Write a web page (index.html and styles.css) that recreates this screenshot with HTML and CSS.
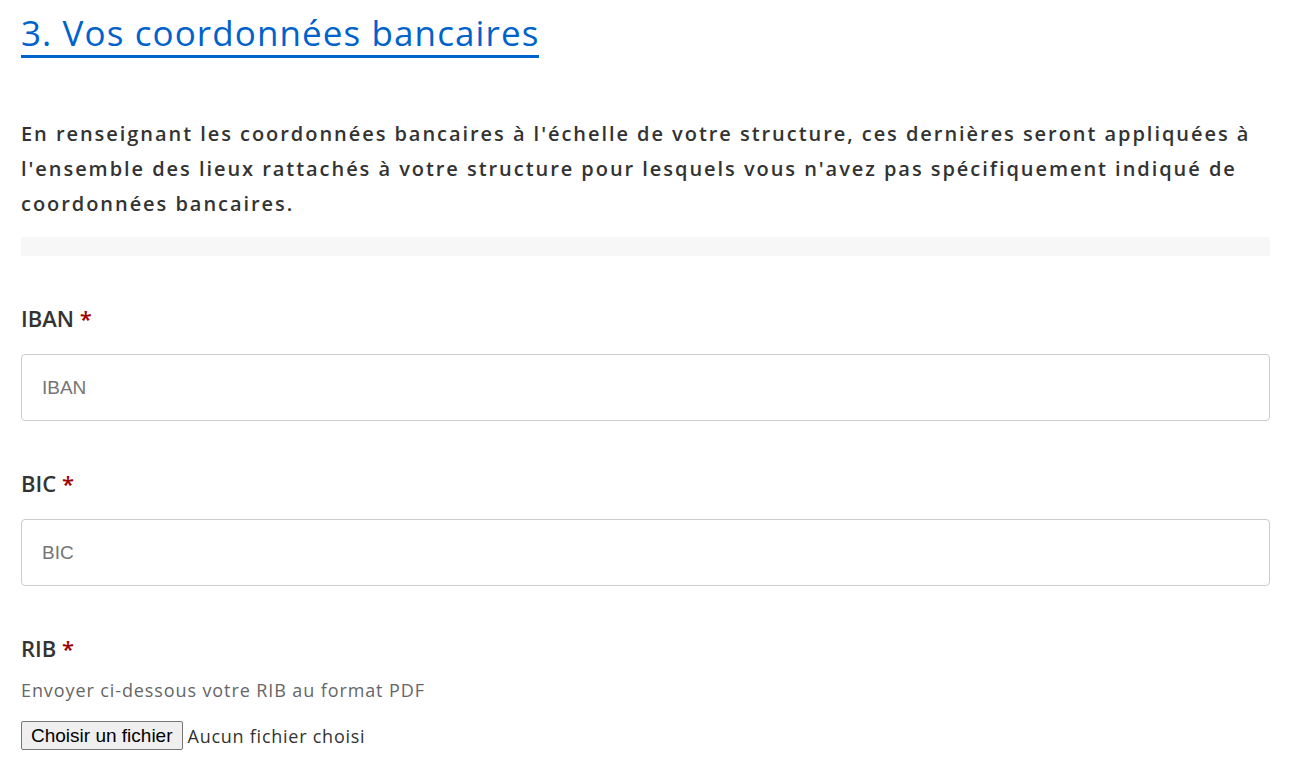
FILE: index.html
```html
<!DOCTYPE html>
<html lang="fr">
<head>
  <meta charset="UTF-8">
  <meta name="viewport" content="width=device-width, initial-scale=1.0">
  <title>Coordonnées bancaires</title>
  <link rel="stylesheet" href="styles.css">
</head>
<body>
  <main class="page">
    <h2 class="section-title">3. Vos coordonnées bancaires</h2>

    <p class="intro">
      En renseignant les coordonnées bancaires à l'échelle de votre structure, ces dernières seront appliquées à
      l'ensemble des lieux rattachés à votre structure pour lesquels vous n'avez pas spécifiquement indiqué de
      coordonnées bancaires.
    </p>

    <div class="band"></div>

    <div class="field">
      <label for="iban">IBAN <span class="required">*</span></label>
      <input type="text" id="iban" name="iban" placeholder="IBAN">
    </div>

    <div class="field">
      <label for="bic">BIC <span class="required">*</span></label>
      <input type="text" id="bic" name="bic" placeholder="BIC">
    </div>

    <div class="field field-file">
      <label for="rib">RIB <span class="required">*</span></label>
      <p class="help">Envoyer ci-dessous votre RIB au format PDF</p>
      <label class="file-picker">
        <input type="file" id="rib" name="rib" accept="application/pdf">
        <span class="file-button">Choisir un fichier</span>
        <span class="file-name">Aucun fichier choisi</span>
      </label>
    </div>
  </main>
</body>
</html>
```

FILE: styles.css
```css
* {
  box-sizing: border-box;
}

body {
  margin: 0;
  font-family: 'Open Sans', 'Noto Sans', sans-serif;
  color: #333;
}

.page {
  padding: 0 36px 0 21px;
}

.section-title {
  display: inline-block;
  margin: 11px 0 0;
  font-size: 35px;
  font-weight: 400;
  letter-spacing: 1.1px;
  line-height: 44px;
  color: #0063cb;
  border-bottom: 3px solid #0063cb;
}

.intro {
  margin: 58px 0 0;
  font-size: 20px;
  font-weight: 600;
  letter-spacing: 1.95px;
  line-height: 35px;
  color: #333;
}

.band {
  height: 19px;
  margin-top: 16px;
  background: #f7f7f7;
}

.field {
  display: flex;
  flex-direction: column;
  margin-top: 48px;

  label {
    font-size: 22px;
    font-weight: 600;
    line-height: 28px;
    color: #333;
  }

  input[type="text"] {
    height: 67px;
    margin-top: 22px;
    padding: 0 20px;
    border: 1px solid #ccc;
    border-radius: 4px;
    font-family: 'Liberation Sans', Arial, sans-serif;
    font-size: 19px;
    color: #333;
  }

  input::placeholder {
    color: #757575;
  }
}

.required {
  color: #a00000;
}

.field-file {
  .help {
    margin: 16px 0 0;
    font-size: 18px;
    letter-spacing: 0.9px;
    line-height: 24px;
    color: #666;
  }

  .file-picker {
    display: flex;
    align-items: center;
    gap: 5px;
    margin-top: 19px;
    font-weight: 400;
    cursor: pointer;
  }

  input[type="file"] {
    display: none;
  }

  .file-button {
    padding: 3px 9px;
    border: 1px solid #767676;
    border-radius: 2px;
    background: #efefef;
    font-family: 'Liberation Sans', Arial, sans-serif;
    font-size: 19px;
    line-height: 21px;
    letter-spacing: 0;
    color: #000;
  }

  .file-name {
    font-size: 18px;
    letter-spacing: 0.75px;
    color: #333;
  }
}
```
